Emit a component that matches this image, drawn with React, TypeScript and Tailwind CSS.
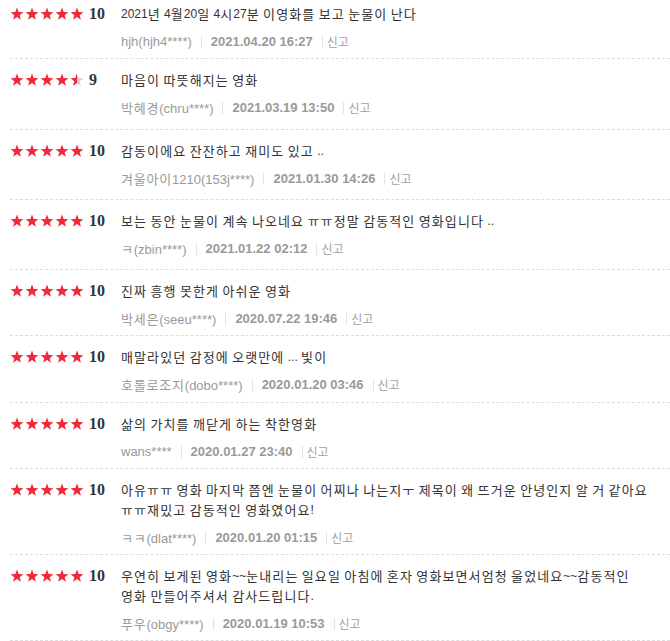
import React from "react";

type Review = {
  score: number;
  text: string;
  user: string;
  date: string;
  extra: number;
};

const reviews: Review[] = [
  { score: 10, text: "2021년 4월20일 4시27분 이영화를 보고 눈물이 난다", user: "hjh(hjh4****)", date: "2021.04.20 16:27", extra: 0 },
  { score: 9, text: "마음이 따뜻해지는 영화", user: "박혜경(chru****)", date: "2021.03.19 13:50", extra: 5 },
  { score: 10, text: "감동이에요 잔잔하고 재미도 있고 ..", user: "겨울아이1210(153j****)", date: "2021.01.30 14:26", extra: 4 },
  { score: 10, text: "보는 동안 눈물이 계속 나오네요 ㅠㅠ정말 감동적인 영화입니다 ..", user: "ㅋ(zbin****)", date: "2021.01.22 02:12", extra: 4 },
  { score: 10, text: "진짜 흥행 못한게 아쉬운 영화", user: "박세은(seeu****)", date: "2020.07.22 19:46", extra: 0 },
  { score: 10, text: "매말라있던 감정에 오랫만에 ... 빛이", user: "호롤로조지(dobo****)", date: "2020.01.20 03:46", extra: 1 },
  { score: 10, text: "삶의 가치를 깨닫게 하는 착한영화", user: "wans****", date: "2020.01.27 23:40", extra: 0 },
  { score: 10, text: "아유ㅠㅠ 영화 마지막 쯤엔 눈물이 어찌나 나는지ㅜ 제목이 왜 뜨거운 안녕인지 알 거 같아요 ㅠㅠ재밌고 감동적인 영화였어요!", user: "ㅋㅋ(dlat****)", date: "2020.01.20 01:15", extra: 0 },
  { score: 10, text: "우연히 보게된 영화~~눈내리는 일요일 아침에 혼자 영화보면서엄청 울었네요~~감동적인 영화 만들어주셔서 감사드립니다.", user: "푸우(obgy****)", date: "2020.01.19 10:53", extra: 0 },
];

const STAR = "M7 0.6 L8.65 5.05 L13.4 5.2 L9.65 8.15 L10.95 12.75 L7 10.05 L3.05 12.75 L4.35 8.15 L0.6 5.2 L5.35 5.05 Z";

function Stars({ score, id }: { score: number; id: number }) {
  const filled = score / 2;
  return (
    <svg width="74" height="14" viewBox="0 0 74 14" className="block shrink-0">
      <defs>
        <clipPath id={`half-${id}`}>
          <rect x="0" y="0" width="7" height="14" />
        </clipPath>
      </defs>
      {[0, 1, 2, 3, 4].map((i) => {
        const full = i + 1 <= filled;
        const half = !full && i + 0.5 <= filled;
        return (
          <g key={i} transform={`translate(${i * 15} 0)`}>
            {full ? (
              <path d={STAR} fill="#f0283a" />
            ) : (
              <>
                <path d={STAR} fill="#cfcfcf" />
                {half && <path d={STAR} fill="#f0283a" clipPath={`url(#half-${id})`} />}
              </>
            )}
          </g>
        );
      })}
    </svg>
  );
}

function splitRuns(s: string) {
  return s.match(/[\x00-\x7F]+|[^\x00-\x7F]+/g) ?? [];
}

function ReviewText({ text }: { text: string }) {
  return (
    <p className="w-[530px] break-keep text-[12px] leading-[20px] text-[#333333] [font-family:'Liberation_Sans','Noto_Sans_CJK_KR',sans-serif]">
      {splitRuns(text).map((run, i) =>
        /^[\x00-\x7F]+$/.test(run) ? (
          <span key={i} className="align-top leading-[20px]">{run}</span>
        ) : (
          <span key={i} className="align-top leading-[20px] text-[13px] tracking-[1.1px] [font-family:'Noto_Sans_CJK_KR',sans-serif]">
            {run}
          </span>
        )
      )}
    </p>
  );
}

function UserName({ name }: { name: string }) {
  return (
    <span className="text-[#9a9a9a] text-[13px] leading-[16px] [font-family:'Liberation_Sans','Noto_Sans_CJK_KR',sans-serif]">
      {splitRuns(name).map((run, i) =>
        /^[\x00-\x7F]+$/.test(run) ? (
          <span key={i}>{run}</span>
        ) : (
          <span key={i} className="tracking-[0.8px] [font-family:'Noto_Sans_CJK_KR',sans-serif]">
            {run}
          </span>
        )
      )}
    </span>
  );
}

export default function App() {
  return (
    <div className="w-[670px] bg-white -mt-[7px] overflow-hidden">
      {reviews.map((r, idx) => (
        <div
          key={idx}
          className="ml-[10px] flex border-b border-dashed border-[#dddddd] pt-[11px]"
          style={{ paddingBottom: 8 + r.extra }}
        >
          <div className="w-[111px] shrink-0 flex items-start">
            <div className="flex items-center h-[20px]">
              <Stars score={r.score} id={idx} />
              <span className="ml-[5px] text-[16px] font-bold text-[#333333] leading-[20px] [font-family:'Liberation_Serif',serif]">
                {r.score}
              </span>
            </div>
          </div>
          <div className="flex-1 min-w-0">
            <ReviewText text={r.text} />
            <div className="mt-[10px] flex items-center h-[16px] leading-[16px]">
              <UserName name={r.user} />
              <span className="mx-[9px] w-px h-[12px] bg-[#e3e3e3]" />
              <span className="text-[13px] text-[#999999] font-bold [font-family:'Liberation_Sans',sans-serif]">{r.date}</span>
              <span className="ml-[9px] mr-[4px] w-px h-[12px] bg-[#e3e3e3]" />
              <span className="text-[12px] text-[#a0a0a0] [font-family:'Noto_Sans_CJK_KR',sans-serif]">신고</span>
            </div>
          </div>
        </div>
      ))}
    </div>
  );
}
